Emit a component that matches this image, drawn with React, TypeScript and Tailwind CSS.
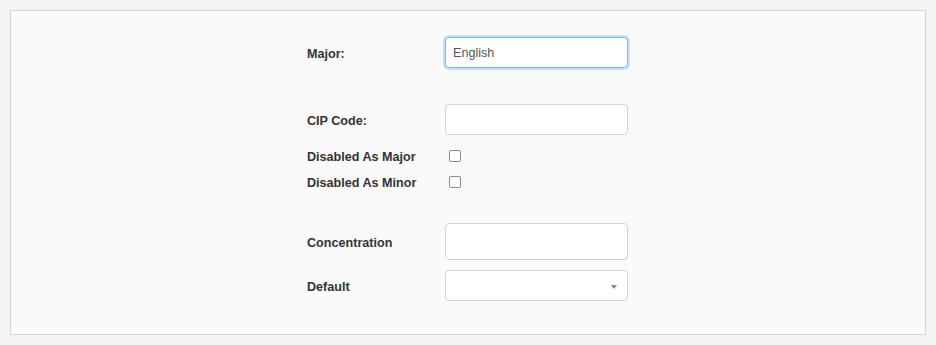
import React from 'react';

const font = { fontFamily: '"Liberation Sans", Arial, sans-serif' };

function Label({ text }: { text: string }) {
    return <div className="w-[138px] shrink-0 pt-[3px] text-[12.6px] font-bold text-[#333]">{text}</div>;
}

function TextBox({ value, focused, tall }: { value?: string, focused?: boolean, tall?: boolean }) {
    const base = "w-[183px] rounded-[4px] bg-white px-[7px] text-[12.6px] text-[#555] outline-none";
    const look = focused
        ? "border border-[#80b8ee] shadow-[0_0_0_2px_#c4dffa]"
        : "border border-[#d2d2d2]";
    return (
        <input
            readOnly
            value={value ?? ""}
            className={`${base} ${look} ${tall ? "h-[37px]" : "h-[31px]"}`}
            style={font}
        />
    );
}

function Check() {
    return (
        <div className="flex w-[183px] pl-[4px]">
            <input type="checkbox" className="w-[12px] h-[12px] appearance-none rounded-[2px] border border-[#8c8c8c] bg-white" />
        </div>
    );
}

function SelectBox() {
    return (
        <div className="relative flex h-[31px] w-[183px] items-center rounded-[4px] border border-[#d2d2d2] bg-white">
            <span className="absolute right-[10px] top-[14px] h-0 w-0 border-x-[3px] border-t-[4px] border-x-transparent border-t-[#888]"></span>
        </div>
    );
}

export default function App() {
    return (
        <div className="h-[345px] w-[936px] bg-[#f4f4f4] pt-[10px] pl-[10px]" style={font}>
            <div className="flex h-[325px] w-[916px] flex-col border border-[#d4d4d4] bg-[#fafafa]">
                <div className="mx-auto flex w-[322px] flex-col">
                    <div className="mt-[26px] flex items-center">
                        <Label text="Major:" />
                        <TextBox value="English" focused />
                    </div>
                    <div className="mt-[36px] flex items-center">
                        <Label text="CIP Code:" />
                        <TextBox />
                    </div>
                    <div className="mt-[8px] flex h-[26px] items-center">
                        <Label text="Disabled As Major" />
                        <Check />
                    </div>
                    <div className="flex h-[26px] items-center">
                        <Label text="Disabled As Minor" />
                        <Check />
                    </div>
                    <div className="mt-[28px] flex items-center">
                        <Label text="Concentration" />
                        <TextBox tall />
                    </div>
                    <div className="mt-[10px] flex items-center">
                        <Label text="Default" />
                        <SelectBox />
                    </div>
                </div>
            </div>
        </div>
    );
}
